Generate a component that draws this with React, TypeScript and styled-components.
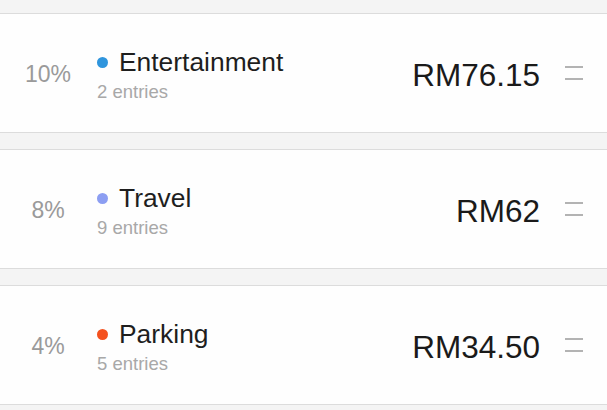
import React from "react";
import styled, { createGlobalStyle } from "styled-components";

const Global = createGlobalStyle`
  html, body { margin: 0; padding: 0; background: #f4f4f4; }
  body { font-family: "Liberation Sans", Arial, sans-serif; -webkit-font-smoothing: antialiased; }
`;

const Page = styled.div`
  width: 607px;
  height: 410px;
  overflow: hidden;
  background: #f4f4f4;
  padding-top: 13px;
  box-sizing: border-box;
  display: flex;
  flex-direction: column;
  gap: 16px;
`;

const Card = styled.div`
  height: 120px;
  box-sizing: border-box;
  background: #fefefe;
  border-top: 1px solid #dcdcdc;
  border-bottom: 1px solid #dcdcdc;
  display: flex;
  align-items: center;
  padding-right: 24px;
  flex-shrink: 0;
`;

const Percent = styled.div`
  width: 96px;
  margin-top: 2px;
  text-align: center;
  font-size: 23px;
  color: #9a9a9a;
  font-weight: 300;
`;

const Info = styled.div`
  flex: 1;
  margin-top: 6px;
  display: flex;
  flex-direction: column;
`;

const TitleRow = styled.div`
  display: flex;
  align-items: center;
  height: 28px;
`;

const Dot = styled.span<{ $color: string }>`
  width: 11px;
  height: 11px;
  border-radius: 50%;
  background: ${(p) => p.$color};
  margin-left: 1px;
  margin-right: 11px;
`;

const Title = styled.span`
  font-size: 26.4px;
  color: #1e1e1e;
  line-height: 28px;
`;

const Entries = styled.div`
  font-size: 18.5px;
  color: #a8a8a8;
  line-height: 24px;
  margin-top: 4px;
  margin-left: 1px;
`;

const Amount = styled.div`
  font-size: 31.5px;
  color: #1a1a1a;
  margin-top: 4px;
  margin-right: 25px;
`;

const Handle = styled.svg`
  width: 18px;
  height: 14px;
  display: block;
`;

const rows = [
  { pct: "10%", color: "#2f95dd", title: "Entertainment", entries: "2 entries", amount: "RM76.15" },
  { pct: "8%", color: "#8c9ef2", title: "Travel", entries: "9 entries", amount: "RM62" },
  { pct: "4%", color: "#f4511e", title: "Parking", entries: "5 entries", amount: "RM34.50" },
];

export default function App() {
  return (
    <>
      <Global />
      <Page>
        {rows.map((r) => (
          <Card key={r.title}>
            <Percent>{r.pct}</Percent>
            <Info>
              <TitleRow>
                <Dot $color={r.color} />
                <Title>{r.title}</Title>
              </TitleRow>
              <Entries>{r.entries}</Entries>
            </Info>
            <Amount>{r.amount}</Amount>
            <Handle viewBox="0 0 18 14">
              <line x1="0" y1="1" x2="18" y2="1" stroke="#9a9a9a" strokeWidth="1.5" />
              <line x1="0" y1="13" x2="18" y2="13" stroke="#9a9a9a" strokeWidth="1.5" />
            </Handle>
          </Card>
        ))}
      </Page>
    </>
  );
}
